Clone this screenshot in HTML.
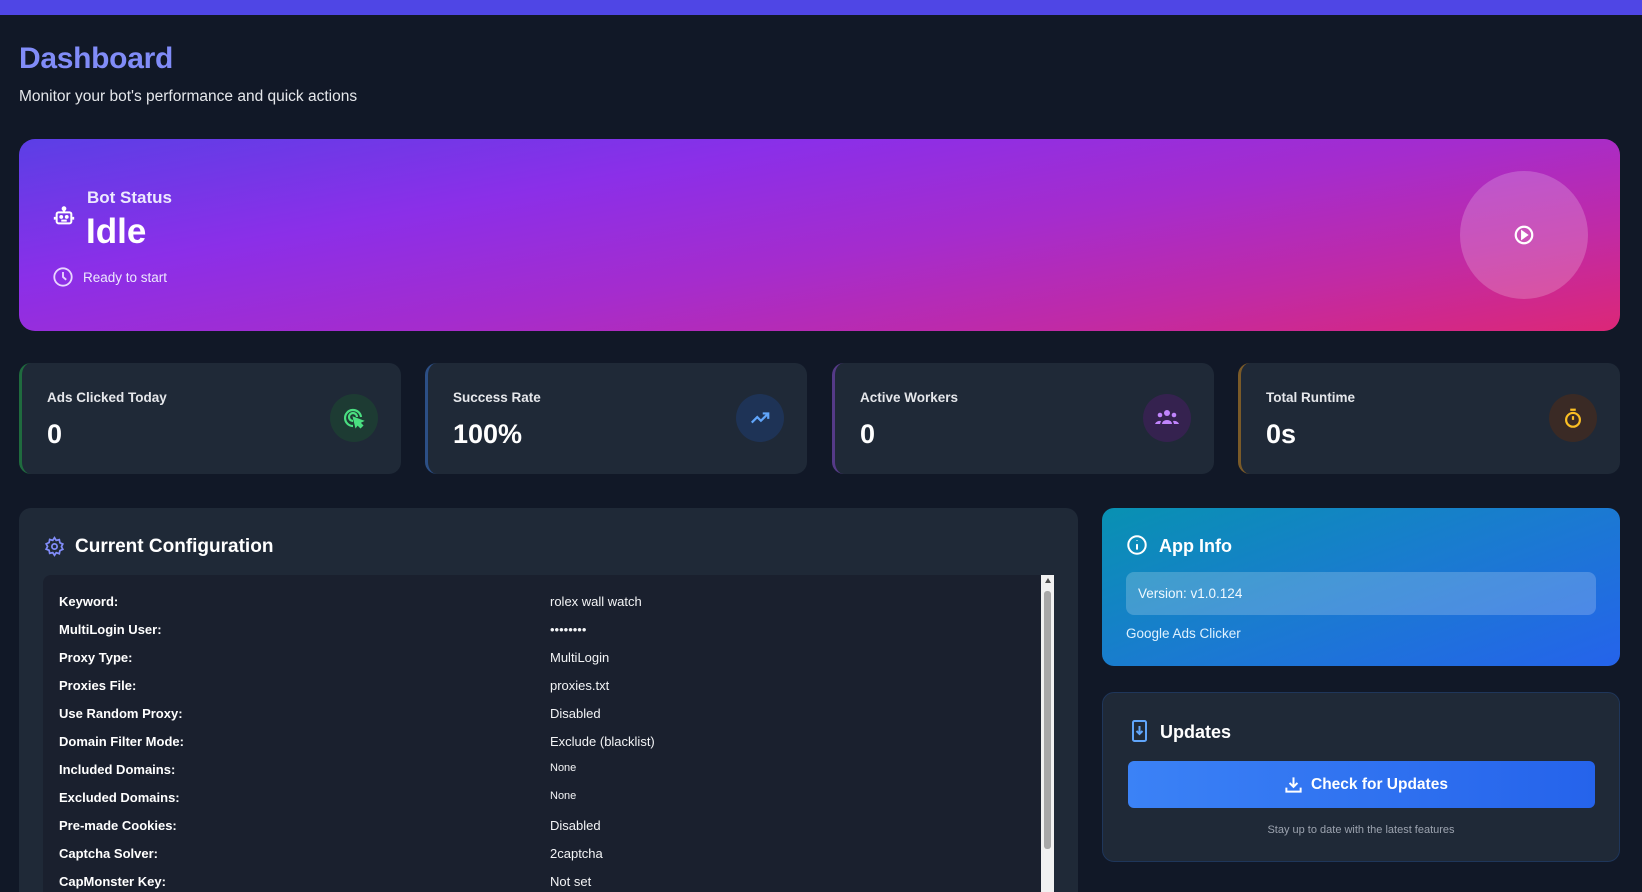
<!DOCTYPE html>
<html style="overflow:hidden;width:1642px;height:892px"><head><meta charset="utf-8"><style>
*{box-sizing:border-box;margin:0;padding:0}
body{width:1642px;height:892px;overflow:hidden;background:#111827;font-family:"Liberation Sans",sans-serif;color:#fff;position:relative}
.abs{position:absolute}
.top{left:0;top:0;width:1642px;height:15px;background:#4f46e5}
h1{position:absolute;left:19px;top:42px;font-size:30px;font-weight:bold;color:#818cf8;letter-spacing:-0.3px}
.sub{left:19px;top:88px;font-size:15.5px;color:#e5e7eb}
.banner{left:19px;top:139px;width:1601px;height:192px;border-radius:16px;background:linear-gradient(170deg,#5b3fe6 0%,#8b2fe8 30%,#a52ccd 55%,#c02aa6 78%,#dc2777 100%)}
.card{top:363px;height:111px;width:382px;background:#1f2937;border-radius:12px;border-left:3px solid}
.card .l{position:absolute;left:25px;top:27px;font-size:13.5px;font-weight:bold;color:#e5e7eb}
.card .v{position:absolute;left:25px;top:56px;font-size:27px;font-weight:bold}
.card .ic{position:absolute;right:23px;top:31px;width:48px;height:48px;border-radius:50%;display:flex;align-items:center;justify-content:center}
.panel{background:#1f2937;border-radius:12px 12px 0 0;overflow:hidden}
.row{position:absolute;left:16px;font-size:13px;height:20px}
.row b{position:absolute;left:0;white-space:nowrap}
.row span{position:absolute;left:491px;white-space:nowrap;color:#f3f4f6}
</style></head><body>
<div class="abs top"></div>
<h1>Dashboard</h1>
<div class="abs sub">Monitor your bot's performance and quick actions</div>

<div class="abs banner">
  <svg class="abs" style="left:34px;top:66px" width="22" height="22" viewBox="0 0 24 24" fill="none" stroke="#fff" stroke-width="2.2"><rect x="4" y="8" width="16" height="12" rx="2"/><path d="M12 4v4M2 13v3M22 13v3M9 17h6"/><circle cx="12" cy="4" r="1.5" fill="#fff"/><circle cx="9" cy="13" r="1" fill="#fff"/><circle cx="15" cy="13" r="1" fill="#fff"/></svg>
  <div class="abs" style="left:68px;top:49px;font-size:17px;font-weight:bold;color:#ede9fe">Bot Status</div>
  <div class="abs" style="left:67px;top:73px;font-size:35px;font-weight:bold">Idle</div>
  <svg class="abs" style="left:33px;top:127px" width="22" height="22" viewBox="0 0 24 24" fill="none" stroke="#e9d5ff" stroke-width="2"><circle cx="12" cy="12" r="9.5"/><path d="M12 6.5v5.5l3.5 3"/></svg>
  <div class="abs" style="left:64px;top:131px;font-size:13.5px;color:#ede9fe">Ready to start</div>
  <div class="abs" style="left:1441px;top:32px;width:128px;height:128px;border-radius:50%;background:rgba(255,255,255,0.2)"></div>
  <svg class="abs" style="left:1494px;top:85px" width="22" height="22" viewBox="0 0 24 24" fill="none" stroke="#fff" stroke-width="2.4"><circle cx="12" cy="12" r="9"/><path d="M10 8.5l5 3.5-5 3.5z" fill="#fff"/></svg>
</div>

<div class="abs card" style="left:19px;border-color:#1f6b3e">
  <div class="l">Ads Clicked Today</div><div class="v">0</div>
  <div class="ic" style="background:#1d3b33"><svg width="24" height="24" viewBox="0 0 24 24" fill="none" stroke="#4ade80" stroke-width="2.2"><path d="M11 20a8 8 0 1 1 8-9"/><path d="M11 15a4 4 0 1 1 4-4"/><path d="M12 12l8 3-3 1.5 3 3-1.5 1.5-3-3L14 20z" fill="#4ade80"/></svg></div>
</div>
<div class="abs card" style="left:425px;border-color:#2c4f86">
  <div class="l">Success Rate</div><div class="v">100%</div>
  <div class="ic" style="background:#1e3356"><svg width="22" height="22" viewBox="0 0 24 24" fill="none" stroke="#60a5fa" stroke-width="2.4"><path d="M3 17l6-6 4 4 8-8M15 7h6v6"/></svg></div>
</div>
<div class="abs card" style="left:832px;border-color:#553a87">
  <div class="l">Active Workers</div><div class="v">0</div>
  <div class="ic" style="background:#35224f"><svg width="26" height="22" viewBox="0 0 26 22" fill="#c084fc"><circle cx="13" cy="6" r="3"/><circle cx="6" cy="8" r="2.3"/><circle cx="20" cy="8" r="2.3"/><path d="M8 17a5 4 0 0 1 10 0z"/><path d="M1 17a5 4 0 0 1 6-3l-1 3z"/><path d="M25 17a5 4 0 0 0-6-3l1 3z"/></svg></div>
</div>
<div class="abs card" style="left:1238px;border-color:#7a5a28">
  <div class="l">Total Runtime</div><div class="v">0s</div>
  <div class="ic" style="background:#3a2a25"><svg width="22" height="22" viewBox="0 0 24 24" fill="none" stroke="#fbbf24" stroke-width="2.4"><circle cx="12" cy="14" r="7.5"/><path d="M12 10v4M9 3h6"/></svg></div>
</div>

<div class="abs panel" style="left:19px;top:508px;width:1059px;height:384px">
  <svg class="abs" style="left:25px;top:28px" width="21" height="21" viewBox="0 0 24 24" fill="none" stroke="#818cf8" stroke-width="2"><circle cx="12" cy="12" r="3"/><path d="M12 2l2 3 3.5-.8.7 3.5 3.3 1.5-1.6 3 1.6 3-3.3 1.5-.7 3.5L14 19l-2 3-2-3-3.5.8-.7-3.5L2.5 15l1.6-3-1.6-3 3.3-1.5.7-3.5L10 5z"/></svg>
  <div class="abs" style="left:56px;top:28px;font-size:19px;font-weight:bold">Current Configuration</div>
  <div class="abs" style="left:24px;top:67px;width:1011px;height:360px;background:#1a202e;border-radius:8px">
    <div class="abs" style="right:0;top:0;width:13px;height:360px;background:#f1f1f1"></div>
    <div class="abs" style="right:3px;top:16px;width:7px;height:258px;background:#a8a8a8;border-radius:3px"></div>
    <div class="abs" style="right:3px;top:3px;width:0;height:0;border-left:3.5px solid transparent;border-right:3.5px solid transparent;border-bottom:5px solid #505050"></div>
    <div class="row" style="top:19px"><b>Keyword:</b><span>rolex wall watch</span></div>
    <div class="row" style="top:47px"><b>MultiLogin User:</b><span>••••••••</span></div>
    <div class="row" style="top:75px"><b>Proxy Type:</b><span>MultiLogin</span></div>
    <div class="row" style="top:103px"><b>Proxies File:</b><span>proxies.txt</span></div>
    <div class="row" style="top:131px"><b>Use Random Proxy:</b><span>Disabled</span></div>
    <div class="row" style="top:159px"><b>Domain Filter Mode:</b><span>Exclude (blacklist)</span></div>
    <div class="row" style="top:187px"><b>Included Domains:</b><span style="font-size:11px">None</span></div>
    <div class="row" style="top:215px"><b>Excluded Domains:</b><span style="font-size:11px">None</span></div>
    <div class="row" style="top:243px"><b>Pre-made Cookies:</b><span>Disabled</span></div>
    <div class="row" style="top:271px"><b>Captcha Solver:</b><span>2captcha</span></div>
    <div class="row" style="top:299px"><b>CapMonster Key:</b><span>Not set</span></div>
  </div>
</div>

<div class="abs" style="left:1102px;top:508px;width:518px;height:158px;border-radius:12px;background:linear-gradient(160deg,#0891b2 0%,#1a7bd0 50%,#2563eb 100%)">
  <svg class="abs" style="left:24px;top:26px" width="22" height="22" viewBox="0 0 24 24" fill="none" stroke="#fff" stroke-width="2.2"><circle cx="12" cy="12" r="9.5"/><path d="M12 11v6M12 7v.5"/></svg>
  <div class="abs" style="left:57px;top:28px;font-size:18px;font-weight:bold">App Info</div>
  <div class="abs" style="left:24px;top:64px;width:470px;height:43px;border-radius:8px;background:rgba(255,255,255,0.2)"></div>
  <div class="abs" style="left:36px;top:78px;font-size:13.5px;color:#f0f9ff">Version: v1.0.124</div>
  <div class="abs" style="left:24px;top:118px;font-size:13.5px;color:#e0f2fe">Google Ads Clicker</div>
</div>

<div class="abs" style="left:1102px;top:692px;width:518px;height:170px;border-radius:12px;background:#1f2937;border:1px solid #1f365a">
  <svg class="abs" style="left:28px;top:26px" width="18" height="24" viewBox="0 0 18 24" fill="none" stroke="#60a5fa" stroke-width="2"><rect x="2" y="2" width="13" height="20" rx="1.5"/><path d="M8.5 7v8M5.5 12l3 3 3-3"/></svg>
  <div class="abs" style="left:57px;top:29px;font-size:18px;font-weight:bold">Updates</div>
  <div class="abs" style="left:25px;top:68px;width:467px;height:47px;border-radius:6px;background:linear-gradient(90deg,#3b82f6,#2563eb)"></div>
  <svg class="abs" style="left:181px;top:82px" width="19" height="19" viewBox="0 0 24 24" fill="none" stroke="#fff" stroke-width="2.5"><path d="M12 3v12M7 10l5 5 5-5M3 16v5h18v-5"/></svg>
  <div class="abs" style="left:208px;top:83px;font-size:15.5px;font-weight:bold">Check for Updates</div>
  <div class="abs" style="left:0;width:516px;text-align:center;top:131px;font-size:11px;color:#9ca3af">Stay up to date with the latest features</div>
</div>
</body></html>
